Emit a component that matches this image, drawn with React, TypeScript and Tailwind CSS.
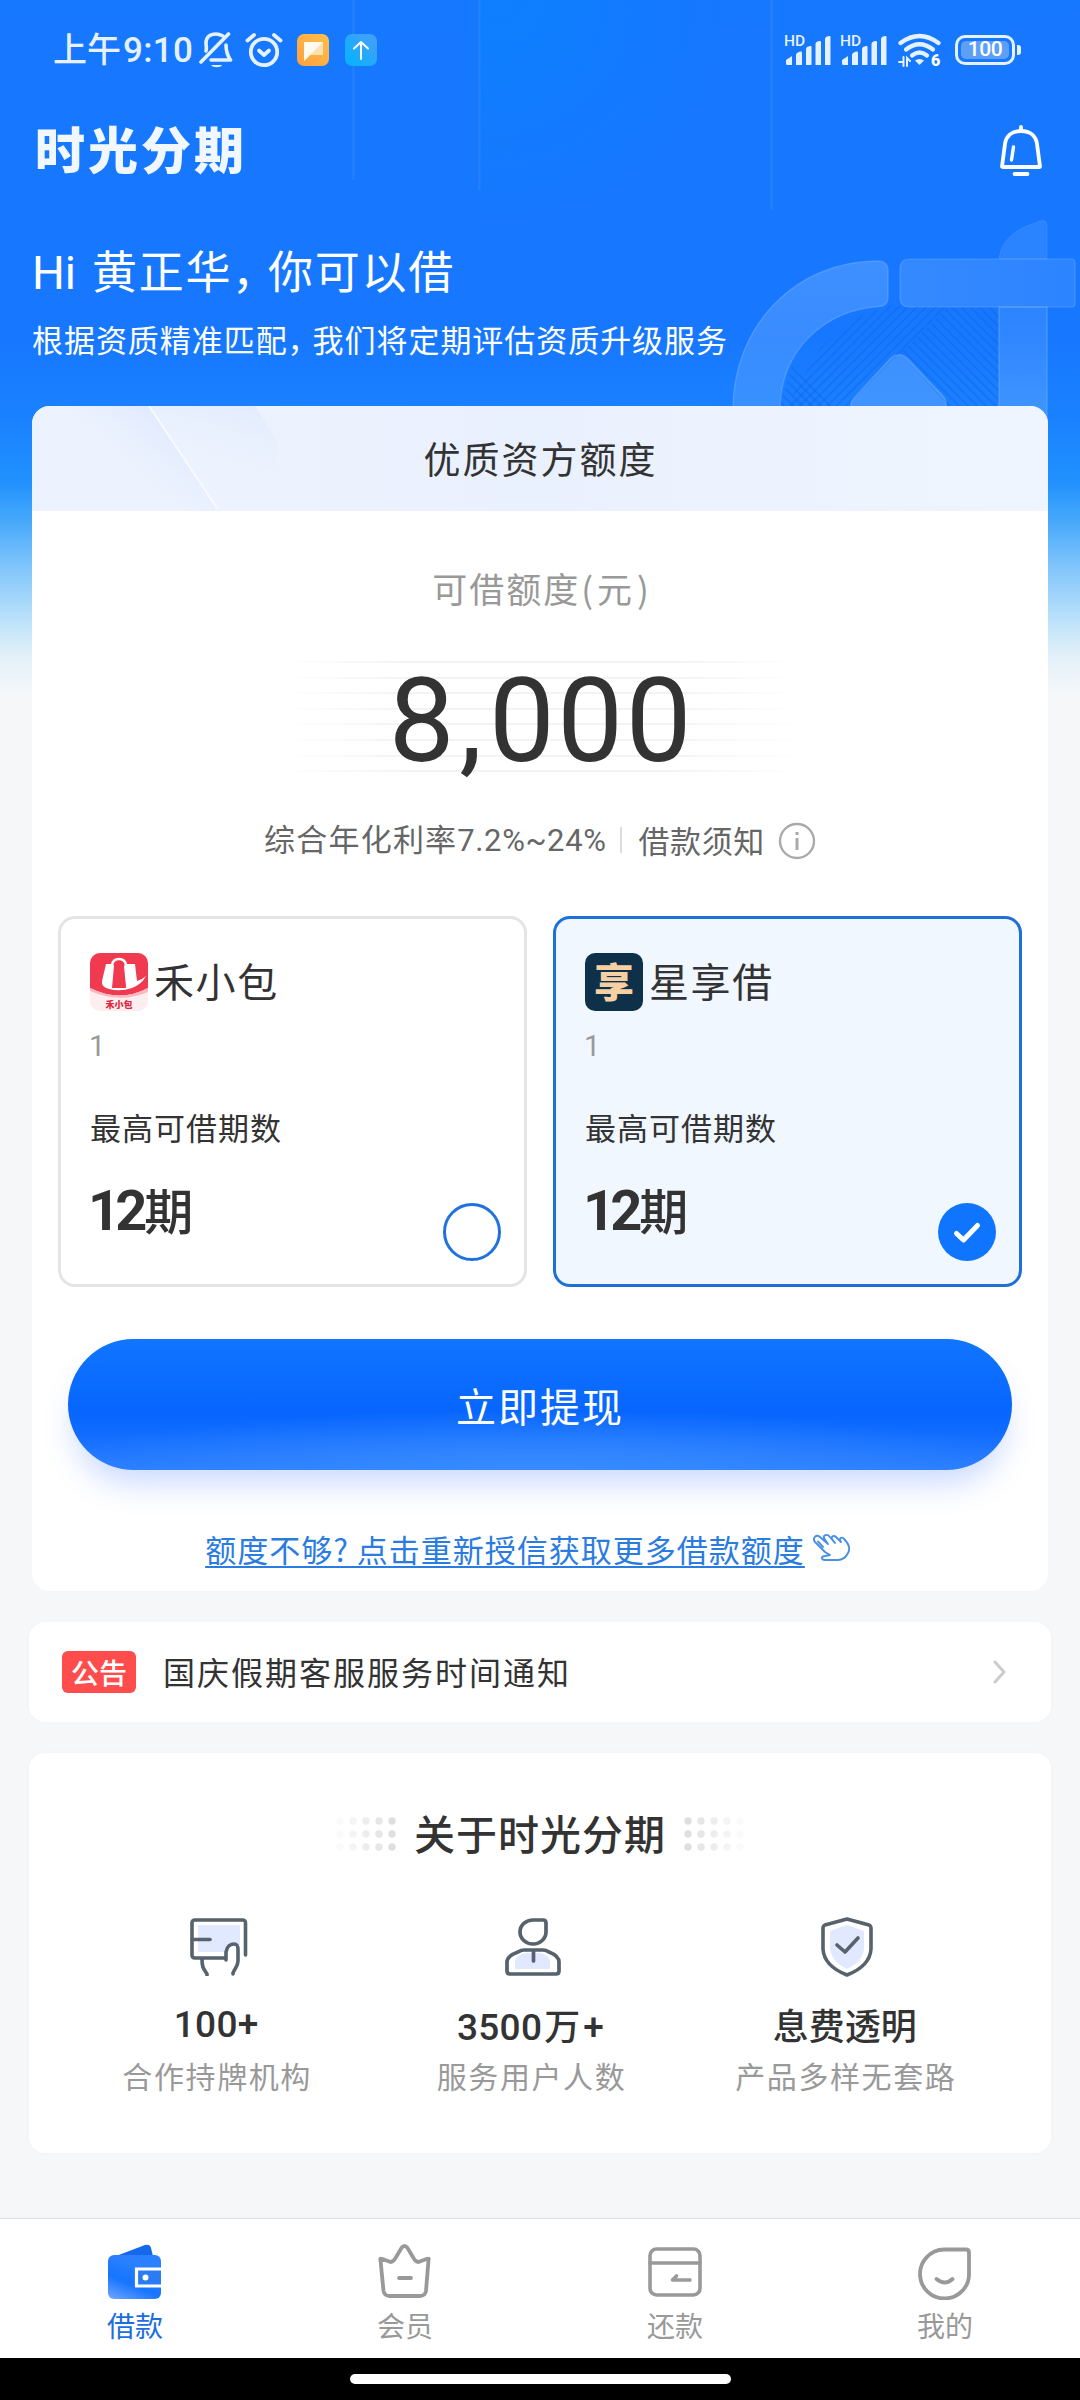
import React from "react";

function MuteIcon() {
  return (
    <svg width="34" height="38" viewBox="0 0 34 38" fill="none" stroke="#e6f1ff" strokeWidth="3.6" strokeLinecap="round" strokeLinejoin="round">
      <path d="M7 20c1-3 0-5 0-8C7 6 11 3 17 3c3 0 5 1 7 2" />
      <path d="M27 14c0 6 1 10 4.500 15H12" />
      <path d="M29.500 3L2 31" />
      <path d="M12 34h11c-1 3-9 3-11 0z" fill="#e6f1ff" stroke="none" />
    </svg>
  );
}

function AlarmIcon() {
  return (
    <svg width="38" height="36" viewBox="0 0 38 36" fill="none" stroke="#e6f1ff" strokeWidth="3.800" strokeLinecap="round" strokeLinejoin="round">
      <circle cx="19" cy="20" r="13.2" />
      <path d="M14 18.5l5 4.5 5-4.5" />
      <path d="M2.500 8.500L9 3M35.500 8.500L29 3" />
    </svg>
  );
}

function NoteIcon() {
  return (
    <svg width="32" height="32" viewBox="0 0 32 32">
      <defs>
        <linearGradient id="note" x1="0" y1="1" x2="1" y2="0">
          <stop offset="0" stopColor="#ff9f3e" />
          <stop offset="1" stopColor="#ffc04a" />
        </linearGradient>
      </defs>
      <rect width="32" height="32" rx="7" fill="url(#note)" />
      <path d="M7 8h19v13H13l-6 6z" fill="#ffe0b0" />
      <path d="M7 8h19L7 27z" fill="#fffaf0" />
    </svg>
  );
}

function UploadIcon() {
  return (
    <svg width="32" height="32" viewBox="0 0 32 32">
      <defs>
        <linearGradient id="upload" x1="0" y1="1" x2="1" y2="0">
          <stop offset="0" stopColor="#00b4ff" />
          <stop offset="1" stopColor="#4a9df8" />
        </linearGradient>
      </defs>
      <rect width="32" height="32" rx="7" fill="url(#upload)" />
      <path d="M16 25V8M9 14.500L16 8l7 6.500" stroke="#fff" strokeWidth="2" fill="none" strokeLinecap="round" strokeLinejoin="round" />
    </svg>
  );
}

function SignalIcon() {
  return (
    <div className="relative h-8 w-[47px]">
      <span className="absolute left-0 top-[-1px] text-[15.500px] leading-[16px] font-medium text-[#e6f1ff] font-['Roboto',sans-serif]">HD</span>
      <svg className="absolute left-[2px] top-0" width="45" height="32" viewBox="0 0 45 32" fill="#e6f1ff">
        <path d="M0 26l6-4v9H1.500Q0 31 0 29.500z" />
        <path d="M10 21q0-1 1-2l3-1.500q2-.5 2 1V31h-6z" />
        <path d="M20 15q0-1 1-2l3-1q1.500-.5 1.500 1V31H20z" />
        <path d="M29.500 10q0-1 1-2l2.500-1q2-.5 2 1V31h-5.500z" />
        <path d="M39 5q0-1 1-2l2.500-1q2-.5 2 1V31H39z" />
      </svg>
    </div>
  );
}

function WifiIcon() {
  return (
    <div className="relative h-[34px] w-11">
      <svg width="44" height="34" viewBox="0 0 44 34" fill="none" stroke="#e6f1ff" strokeWidth="4.200" strokeLinecap="round">
        <path d="M2.500 10Q21.500-4 40.500 10" />
        <path d="M8 16.500Q21.500 6 35 16.500" />
        <path d="M14 22.500q7.500-6 15 0" />
        <path d="M17 27.500q4.500-3 9 0L21.500 32z" fill="#e6f1ff" stroke="none" />
        <path d="M1 29h4.500v-5M5.500 29v4M9 33v-8l3 3" strokeWidth="2" />
      </svg>
      <span className="absolute left-[33px] top-[18px] text-[16px] leading-[20px] font-black text-white font-['Roboto',sans-serif]">6</span>
    </div>
  );
}

function BatteryIcon() {
  return (
    <div className="flex items-center gap-0.5">
      <div className="h-[30px] w-[60px] rounded-[10px] border-[3px] border-[#e6f1ff] p-[3px]">
        <div className="flex h-full w-full items-center justify-center rounded-[5px] bg-[#5d9ff5]">
          <span className="text-[21px] leading-none font-medium tracking-[-0.500px] text-white font-['Roboto',sans-serif]">100</span>
        </div>
      </div>
      <div className="h-[10px] w-1 rounded-r-[3px] bg-[#e6f1ff]"></div>
    </div>
  );
}

function StatusBar() {
  return (
    <div className="flex h-[102px] items-center pl-[53px] pr-[59px]">
      <p className="-mt-1 flex w-[146px] items-baseline font-medium leading-none text-[#e6f1ff]">
        <span className="text-[34px]">上午</span>
        <span className="ml-0.5 text-[35px] tracking-[0.300px] font-['Roboto',sans-serif]">9:10</span>
      </p>
      <div className="mt-[-2px] flex items-center">
        <MuteIcon />
        <div className="ml-3"><AlarmIcon /></div>
        <div className="ml-[14px]"><NoteIcon /></div>
        <div className="ml-4"><UploadIcon /></div>
      </div>
      <div className="ml-auto flex items-center -mt-[3px]">
        <SignalIcon />
        <div className="ml-[9px]"><SignalIcon /></div>
        <div className="ml-[11px]"><WifiIcon /></div>
        <div className="ml-[13px]"><BatteryIcon /></div>
      </div>
    </div>
  );
}

function BellIcon() {
  return (
    <svg width="42" height="52" viewBox="0 0 42 52" fill="none" stroke="#fff" strokeWidth="3.800" strokeLinecap="round" strokeLinejoin="round">
      <path d="M21 2v4" />
      <path d="M5 19C6 11 12 6 21 6s15 5 16 13l3 22.500q0 .5-1 .5H3q-1 0-1-.5z" />
      <path d="M13.500 22l-2 13" strokeWidth="3.400" />
      <path d="M14.500 49h13" />
    </svg>
  );
}

// translucent emblem behind the header
function Emblem() {
  const edge = "rgba(120,180,255,0.4)";
  return (
    <svg className="absolute left-0 top-0" width="1080" height="430" viewBox="0 0 1080 430" fill="none">
      <defs>
        <linearGradient id="body" x1="0" y1="0" x2="0" y2="1">
          <stop offset="0" stopColor="#ffffff" stopOpacity="0.17" />
          <stop offset="1" stopColor="#ffffff" stopOpacity="0.13" />
        </linearGradient>
        <linearGradient id="bar" x1="0" y1="0" x2="1" y2="0">
          <stop offset="0" stopColor="#ffffff" stopOpacity="0.13" />
          <stop offset="1" stopColor="#ffffff" stopOpacity="0.09" />
        </linearGradient>
        <linearGradient id="stem" x1="0" y1="0" x2="0" y2="1">
          <stop offset="0" stopColor="#ffffff" stopOpacity="0.09" />
          <stop offset="1" stopColor="#ffffff" stopOpacity="0.17" />
        </linearGradient>
        <radialGradient id="glow" cx="500" cy="0" r="230" gradientUnits="userSpaceOnUse">
          <stop offset="0" stopColor="#0587ff" stopOpacity="0.5" />
          <stop offset="1" stopColor="#0587ff" stopOpacity="0" />
        </radialGradient>
        <pattern id="hatchA" width="6.500" height="6.500" patternUnits="userSpaceOnUse" patternTransform="rotate(45)">
          <path d="M0 0v6.500" stroke="#0d63e6" strokeOpacity="0.4" strokeWidth="4" />
        </pattern>
        <pattern id="hatchB" width="6.500" height="6.500" patternUnits="userSpaceOnUse" patternTransform="rotate(-45)">
          <path d="M0 0v6.500" stroke="#0d63e6" strokeOpacity="0.4" strokeWidth="4" />
        </pattern>
      </defs>
      <path d="M480 0h291v230H480z" fill="url(#glow)" />
      <path d="M353.500 0v180M479.500 0v190M771.500 0v210" stroke="#4b98ff" strokeOpacity="0.3" strokeWidth="2" />
      <path d="M890 306h58l-100 100h-58l4-14 26-44 35-30z" fill="url(#hatchA)" />
      <path d="M793 362l44 44h-57zM948 307h51v99h-51l-48-52z" fill="url(#hatchB)" />
      <path d="M733 410C733 326 795 261 878 261q10 0 10 10v26q0 9-9 9.500C825 310 780 350 780 410z" fill="url(#body)" stroke={edge} strokeWidth="1.500" />
      <path d="M910 259h161q4 0 4 4v40q0 4-4 4H910q-10 0-10-10v-28q0-10 10-10z" fill="url(#bar)" stroke={edge} strokeWidth="1.200" />
      <path d="M999 259c2-18 16-29 31-34l10-4q7-2 7 5v33z" fill="#fff" fillOpacity="0.090" stroke="rgba(120,180,255,0.2)" strokeWidth="1" />
      <path d="M999 307h48v123h-48z" fill="url(#stem)" stroke={edge} strokeWidth="1.500" />
      <path d="M851 410v-7l2-4 38-41q8-7 16 0l36 38q4 4 3 14z" fill="#fff" fillOpacity="0.17" stroke={edge} strokeWidth="1.500" />
    </svg>
  );
}

function BagLogo() {
  return (
    <div className="relative h-[58px] w-[58px] overflow-hidden rounded-[10px] bg-[#fdeef0]">
      <svg className="absolute left-0 top-0" width="58" height="58" viewBox="0 0 58 58">
        <path d="M0 0h58v35Q30 50 0 35z" fill="#ef3a50" />
        <path d="M0 35q30 15 58 0v4q-28 12-58-1z" fill="#fbb8c0" />
        <path d="M16 11h7l1 2-2 22h14l-2-22 2-2h9l2 17q6-2 9-5-4 8-14 12-12 4-23 1-8-2-7-8z" fill="#fff" />
        <path d="M22 12q1-6 7-6t7 6" stroke="#fff" strokeWidth="2.500" fill="none" />
        <path d="M25 12h8l3 23H23z" fill="#ef3a50" />
      </svg>
      <span className="absolute bottom-[2px] left-0 w-full text-center text-[9px] leading-none font-black text-[#e0263c]">禾小包</span>
    </div>
  );
}

function XiangLogo() {
  return (
    <div className="flex h-[58px] w-[58px] items-center justify-center rounded-[10px] bg-[#0e3149]">
      <span className="text-[40px] leading-none font-black text-[#f6cfa3] -mt-1">享</span>
    </div>
  );
}

interface OptionProps {
  logo: React.ReactNode;
  name: string;
  selected?: boolean;
}

function LoanOption({ logo, name, selected }: OptionProps) {
  return (
    <div
      className={
        "relative h-[371px] w-[469px] rounded-[17px] border-[3px] pl-[29px] pt-[34px] " +
        (selected ? "border-[#1f6fd8] bg-[#f0f7ff]" : "border-[#e4e4e4] bg-white")
      }
    >
      <div className="flex h-[58px] items-center">
        {logo}
        <p className="ml-[6px] -mt-1 text-[40px] leading-none tracking-[1.600px] text-[#333]">{name}</p>
      </div>
      <p className="mt-[21px] -ml-px text-[29px] leading-[28px] text-[#999] font-['Roboto',sans-serif]">1</p>
      <p className="mt-[51px] text-[31px] leading-none tracking-[1px] text-[#333]">最高可借期数</p>
      <div className="mt-[41px] flex items-baseline text-[#333]">
        <span className="-ml-[2px] text-[56px] leading-none font-bold tracking-[-5px] font-['Roboto',sans-serif]">12</span>
        <span className="ml-[2px] text-[49px] leading-none font-medium">期</span>
      </div>
      {selected ? (
        <div className="absolute bottom-[23px] right-[23px] flex h-[58px] w-[58px] items-center justify-center rounded-full bg-[#0f75ff]">
          <svg className="mt-0.5" width="30" height="24" viewBox="0 0 30 24" fill="none" stroke="#fff" strokeWidth="5" strokeLinecap="round" strokeLinejoin="round">
            <path d="M4.500 12.500l7 6.500L25.500 4.500" />
          </svg>
        </div>
      ) : (
        <div className="absolute bottom-[23px] right-[23px] h-[58px] w-[58px] rounded-full border-[3px] border-[#1f73e0]"></div>
      )}
    </div>
  );
}

function HandIcon() {
  return (
    <svg width="38" height="28" viewBox="0 0 38 28" fill="none" stroke="#4a90e2" strokeWidth="1.900" strokeLinecap="round" strokeLinejoin="round">
      <path d="M13 18L3 8C0 4 4 0 8 3l8 7-4-6c-1-3 3-4 5-2l6 7-3-4c-1-3 2-4 4-2l5 5-1-2c0-3 3-3 4-1 5 5 7 9 4 14-2 4-6 7-10 7H13c-4 0-4-4 0-4l5-1z" />
      <path d="M11 13L6 7.500" />
    </svg>
  );
}

function LoanCard() {
  return (
    <div className="relative mx-8 mt-[52px] h-[1185px] overflow-hidden rounded-[18px] bg-white">
      <div className="relative flex h-[105px] items-center justify-center bg-[linear-gradient(90deg,#edf3fe,#eaf1fe_50%,#eff5fe)]">
        <svg className="absolute left-0 top-0" width="300" height="105" viewBox="0 0 300 105">
          <defs>
            <linearGradient id="ray" x1="1" y1="0" x2="0" y2="0.700">
              <stop offset="0.200" stopColor="#dde8fd" />
              <stop offset="0.700" stopColor="#edf3fe" stopOpacity="0" />
            </linearGradient>
            <linearGradient id="ray2" x1="0.800" y1="0" x2="0.500" y2="0.900">
              <stop offset="0" stopColor="#e2ecfd" />
              <stop offset="0.700" stopColor="#ebf2fe" stopOpacity="0" />
            </linearGradient>
          </defs>
          <path d="M0 0h117l66 97v8H0z" fill="url(#ray)" />
          <path d="M117 0h106l22 35v70h-58z" fill="url(#ray2)" />
          <path d="M117 0l68 102" stroke="#f7faff" strokeWidth="2" />
        </svg>
        <h2 className="relative pl-px text-[37px] leading-none tracking-[2px] text-[#333]">优质资方额度</h2>
      </div>
      <p className="mt-[59px] pl-[3px] text-center text-[35px] leading-none tracking-[2px] text-[#999]">
        可借额度<span className="pl-px pr-0.5">(</span>元<span className="pl-[3px]">)</span>
      </p>
      <div className="relative mt-[54px] flex h-[120px] justify-center">
        <div className="absolute top-0.5 flex w-[520px] flex-col gap-[13.600px]">
          {[0, 1, 2, 3, 4, 5, 6, 7].map((n) => (
            <div key={n} className="h-0.5 bg-[linear-gradient(90deg,transparent,#f3f3f3_25%,#f3f3f3_75%,transparent)]"></div>
          ))}
        </div>
        <p className="relative mt-0.5 pl-[3px] text-[117px] leading-[120px] tracking-[2.700px] text-[#333] font-['Roboto',sans-serif]">
          8<span className="pl-0.5 pr-1">,</span>000
        </p>
      </div>
      <div className="mt-[43px] flex h-9 items-center justify-center text-[31px] leading-none text-[#666]">
        <p className="-mt-0.5 flex items-baseline">
          <span className="tracking-[1.200px]">综合年化利率</span>
          <span className="tracking-[0.600px] font-['Roboto',sans-serif]">7.2%~24%</span>
        </p>
        <span className="ml-[14px] mr-4 h-[26px] w-0.5 bg-[#ddd]"></span>
        <span className="-mt-0.5 tracking-[0.600px]">借款须知</span>
        <svg className="ml-[13px] mt-0.5" width="38" height="38" viewBox="0 0 38 38" fill="none" stroke="#aaa" strokeWidth="2.400">
          <circle cx="19" cy="19" r="17" />
          <path d="M19 16v12M19 10v3" strokeWidth="3" />
        </svg>
      </div>
      <div className="mt-[58px] flex gap-[26px] pl-[26px]">
        <LoanOption logo={<BagLogo />} name="禾小包" />
        <LoanOption logo={<XiangLogo />} name="星享借" selected />
      </div>
      <button className="mx-9 mt-[52px] flex h-[131px] w-[944px] items-center justify-center rounded-full bg-[radial-gradient(ellipse_55%_45%_at_50%_100%,#388cff,transparent),linear-gradient(180deg,#1075ff,#0766ff_55%,#0f6bff_70%,#2a7dff)] text-[40px] leading-none tracking-[2px] text-white shadow-[0_20px_30px_-6px_rgba(50,110,255,0.250)]">
        立即提现
      </button>
      <div className="mt-[63px] flex items-center justify-center pr-[25px] text-[31px] leading-none">
        <a className="tracking-[1px] text-[#2a7ce0] underline decoration-2 underline-offset-[4px]">额度不够? 点击重新授信获取更多借款额度</a>
        <div className="ml-[7px] -mt-0.5"><HandIcon /></div>
      </div>
    </div>
  );
}

function NoticeBar() {
  return (
    <div className="mx-[29px] mt-[31px] flex h-[100px] items-center rounded-2xl bg-white pl-[33px] pr-[44px] shadow-[0_0_6px_rgba(0,0,0,0.020)]">
      <span className="flex h-[42px] w-[74px] items-center justify-center rounded-md bg-[#ff4c4c] pb-[1px] text-[28px] leading-none font-medium text-white">公告</span>
      <p className="ml-[27px] -mt-0.5 text-[32px] leading-none tracking-[2px] text-[#333]">国庆假期客服服务时间通知</p>
      <svg className="ml-auto" width="16" height="24" viewBox="0 0 16 24" fill="none" stroke="#ccc" strokeWidth="3" strokeLinecap="round" strokeLinejoin="round">
        <path d="M4 2l9 10-9 10" />
      </svg>
    </div>
  );
}

function Dots({ flip }: { flip?: boolean }) {
  const shades = ["#fafafa", "#f4f4f4", "#ededed", "#e6e6e6", "#dfdfdf"];
  return (
    <svg className={flip ? "-scale-x-100" : ""} width="60" height="34" viewBox="0 0 60 34">
      {shades.map((shade, i) =>
        [4, 17, 30].map((y) => <circle key={y} cx={4 + i * 13} cy={y} r="3.700" fill={shade} />)
      )}
    </svg>
  );
}

function PartnerIcon() {
  return (
    <svg width="58" height="58" viewBox="0 0 58 58" fill="none" stroke="#56626c" strokeWidth="3.600" strokeLinecap="round" strokeLinejoin="round">
      <path d="M8 7h42v20h-8l-5 7H8z" fill="#e0e9ff" stroke="none" />
      <path d="M55.500 37V5q0-3-3-3H5Q2 2 2 5v32q0 3 3 3h31" />
      <path d="M2 21.500h18" />
      <path d="M12 41c0 8 1 9 5 15v1" />
      <path d="M36 42v-8c1-6 5-8 8-8 4 0 4 3 4 6v11c0 5-3 7-5 12v1" fill="#fff" />
    </svg>
  );
}

function UserIcon() {
  return (
    <svg width="58" height="58" viewBox="0 0 58 58" fill="none" stroke="#56626c" strokeWidth="3.700" strokeLinecap="round" strokeLinejoin="round">
      <path d="M29 2h10q3 0 3 3v9a13 12 0 1 1-26 0C16 7 22 2 29 2z" />
      <path d="M11 51V42q3-6 12-7h12q8 1 11 7v9z" fill="#e0e9ff" stroke="none" />
      <path d="M20 32h19q3 0 6 2 10 4 10 10v9q0 3-3 3H6q-3 0-3-3v-9Q3 38 14 34q3-2 6-2z" />
      <path d="M29.500 33v10" />
    </svg>
  );
}

function ShieldIcon() {
  return (
    <svg width="52" height="60" viewBox="0 0 52 60" fill="none" stroke="#56626c" strokeWidth="3.600" strokeLinecap="round" strokeLinejoin="round">
      <path d="M26 8l17 6v18q-2 13-17 20Q11 45 9 32V14z" fill="#e0e9ff" stroke="none" />
      <path d="M26 2l22 6q2 1 2 3v21Q49 49 26 58 3 49 2 32V11q0-2 2-3z" />
      <path d="M16 28l8 7 13-14" />
    </svg>
  );
}

function Feature({ icon, title, text }: { icon: React.ReactNode; title: React.ReactNode; text: string }) {
  return (
    <div className="flex flex-1 flex-col items-center">
      <div className="flex h-[60px] items-center pl-[5px]">{icon}</div>
      <div className="mt-[29px] flex h-9 items-baseline text-[36px] leading-none font-medium text-[#333]">{title}</div>
      <p className="mt-[18px] pl-0.5 text-[30px] leading-none tracking-[1.600px] text-[#999]">{text}</p>
    </div>
  );
}

function Num({ children }: { children: React.ReactNode }) {
  return <span className="text-[37px] leading-none tracking-[0.300px] font-['Roboto',sans-serif]">{children}</span>;
}

function About() {
  return (
    <div className="mx-[29px] mt-[31px] h-[400px] rounded-2xl bg-white pt-[59px] shadow-[0_0_6px_rgba(0,0,0,0.020)]">
      <div className="flex items-center justify-center">
        <div className="mt-[3px]"><Dots /></div>
        <h3 className="mx-[18px] text-[41px] leading-none font-medium tracking-[1px] text-[#333]">关于时光分期</h3>
        <div className="mt-[3px]"><Dots flip /></div>
      </div>
      <div className="mt-[64px] flex pl-[30px] pr-[49px]">
        <Feature icon={<PartnerIcon />} title={<Num>100+</Num>} text="合作持牌机构" />
        <Feature icon={<UserIcon />} title={<><Num>3500</Num><span className="ml-0.5 mr-[3px]">万</span><Num>+</Num></>} text="服务用户人数" />
        <Feature icon={<ShieldIcon />} title="息费透明" text="产品多样无套路" />
      </div>
    </div>
  );
}

function WalletIcon() {
  return (
    <svg width="54" height="56" viewBox="0 0 54 56">
      <defs>
        <linearGradient id="wallet" x1="0.100" y1="1" x2="0.500" y2="0.200">
          <stop offset="0" stopColor="#68a2ff" />
          <stop offset="0.500" stopColor="#1674ff" />
          <stop offset="1" stopColor="#2a80ff" />
        </linearGradient>
      </defs>
      <path d="M8 12L37 1q5-1 6 3l2 8z" fill="#1468ec" />
      <rect y="11" width="53" height="44" rx="6" fill="url(#wallet)" />
      <path d="M53 25H28.500v17H53" fill="#2a7cf5" stroke="#fff" strokeWidth="3.200" />
      <circle cx="37.500" cy="33.500" r="3" fill="#fff" />
    </svg>
  );
}

function CrownIcon() {
  return (
    <svg width="54" height="56" viewBox="0 0 54 56" fill="none" stroke="#999" strokeWidth="3.800" strokeLinecap="round" strokeLinejoin="round">
      <path d="M2.500 16q-1-2 2-1l8 3q3 0 5-4l6-10q3-4 6 0l6 10q2 4 5 4l8-3q3-1 2 1l-2.500 31q-1 5-6 5H11.500q-5 0-6-5z" />
      <path d="M21 34h12" />
    </svg>
  );
}

function RepayIcon() {
  return (
    <svg width="54" height="56" viewBox="0 0 54 56" fill="none" stroke="#999" strokeWidth="3.600" strokeLinecap="round" strokeLinejoin="round">
      <rect x="2" y="5" width="50" height="46" rx="6.500" />
      <path d="M2 19h50M42 36H24.500l4-4" />
    </svg>
  );
}

function MineIcon() {
  return (
    <svg width="54" height="56" viewBox="0 0 54 56" fill="none" stroke="#999" strokeWidth="3.800" strokeLinecap="round" strokeLinejoin="round">
      <path d="M26 5.500h22q3 0 3 3V29a24.500 24.500 0 1 1-25-23.500z" />
      <path d="M18.500 35q8.500 7 16 0" />
    </svg>
  );
}

const tabs = [
  { label: "借款", icon: <WalletIcon />, color: "text-[#1a6ee0]" },
  { label: "会员", icon: <CrownIcon />, color: "text-[#999]" },
  { label: "还款", icon: <RepayIcon />, color: "text-[#999]" },
  { label: "我的", icon: <MineIcon />, color: "text-[#999]" },
];

function TabBar() {
  return (
    <div className="mt-auto">
      <div className="flex h-[140px] border-t border-[#dcdfe5] bg-white pt-[25px]">
        {tabs.map((tab) => (
          <div key={tab.label} className="flex flex-1 flex-col items-center">
            {tab.icon}
            <p className={"mt-[11px] text-[28px] leading-none " + tab.color}>{tab.label}</p>
          </div>
        ))}
      </div>
      <div className="flex h-[42px] justify-center bg-black pt-4">
        <div className="h-[10px] w-[381px] rounded-full bg-white"></div>
      </div>
    </div>
  );
}

function App() {
  return (
    <div className="relative flex h-[2400px] w-[1080px] flex-col overflow-hidden bg-[#f6f7f9] font-['Noto_Sans_CJK_SC',sans-serif]">
      <div className="absolute left-0 top-0 h-[700px] w-full bg-[linear-gradient(180deg,#1677ff_0px,#1778ff_340px,#1a82ff_420px,#2090ff_480px,#46a8fb_520px,#80c5fb_567px,#b8e0fa_617px,#e2f0f9_655px,#f6f7f9_695px)]"></div>
      <Emblem />
      <div className="relative flex flex-1 flex-col">
        <StatusBar />
        <div className="flex h-[98px] items-center justify-between pl-[35px] pr-[38px]">
          <h1 className="-mt-2 text-[50px] leading-none font-black tracking-[3px] text-[#f0f7ff]">时光分期</h1>
          <BellIcon />
        </div>
        <div className="pl-8 pt-[47px] text-white">
          <p className="flex h-[45px] items-baseline text-[45px] leading-none tracking-[1.700px]">
            <span className="w-[60px] shrink-0 text-[46px] tracking-normal font-['Roboto',sans-serif]">Hi</span>
            <span>黄正华</span>
            <span className="w-9 tracking-normal [font-feature-settings:'halt']">，</span>
            <span>你可以借</span>
          </p>
          <p className="mt-[31px] flex text-[31px] leading-none tracking-[0.950px]">
            <span>根据资质精准匹配</span>
            <span className="w-[25px] tracking-normal [font-feature-settings:'halt']">，</span>
            <span>我们将定期评估资质升级服务</span>
          </p>
        </div>
        <LoanCard />
        <NoticeBar />
        <About />
        <TabBar />
      </div>
    </div>
  );
}

export default App;
